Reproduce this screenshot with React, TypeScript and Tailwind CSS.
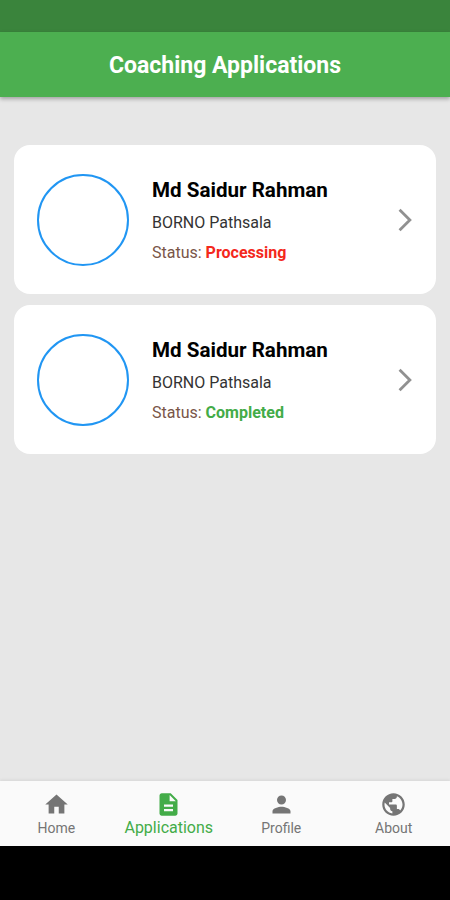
import { MdDescription, MdHome, MdPerson, MdPublic } from "react-icons/md";
import type { IconType } from "react-icons";

type Application = {
  id: number;
  name: string;
  center: string;
  status: "Processing" | "Completed";
};

type Tab = {
  label: string;
  icon: IconType;
};

const applications: Application[] = [
  { id: 1, name: "Md Saidur Rahman", center: "BORNO Pathsala", status: "Processing" },
  { id: 2, name: "Md Saidur Rahman", center: "BORNO Pathsala", status: "Completed" },
];

const tabs: Tab[] = [
  { label: "Home", icon: MdHome },
  { label: "Applications", icon: MdDescription },
  { label: "Profile", icon: MdPerson },
  { label: "About", icon: MdPublic },
];

const ApplicationCard = ({ application }: { application: Application }) => {
  const statusColor =
    application.status === "Processing" ? "text-[#f4281c]" : "text-[#43ac48]";

  return (
    <li className="flex h-[149px] items-center rounded-[16px] bg-white pr-[18px] pl-[23px]">
      <div className="size-[92px] shrink-0 rounded-full border-2 border-[#2196f3]" />
      <div className="ml-[23px] flex-1 pt-[3px] whitespace-nowrap">
        <h2 className="text-[20.6px] leading-[30px] font-bold text-black">
          {application.name}
        </h2>
        <p className="mt-[3px] text-[16px] leading-[30px] text-[#333]">
          {application.center}
        </p>
        <p className="text-[16px] leading-[30px] text-[#795548]">
          Status: <span className={`font-bold ${statusColor}`}>{application.status}</span>
        </p>
      </div>
      <svg viewBox="0 0 24 24" className="size-[26px] shrink-0" fill="none">
        <path d="M7 2.5 16.5 12 7 21.5" stroke="#919191" strokeWidth="2.6" />
      </svg>
    </li>
  );
};

const BottomNav = () => (
  <nav className="z-10 grid h-[65px] shrink-0 grid-cols-4 bg-[#fafafa] shadow-[0_-1px_3px_rgba(0,0,0,0.08)]">
    {tabs.map(({ label, icon: Icon }) => {
      const active = label === "Applications";
      return (
        <button
          key={label}
          type="button"
          className={`flex flex-col items-center pt-[10px] ${
            active ? "text-[#43ac48]" : "text-[#757575]"
          }`}
        >
          <Icon className="size-[27px] shrink-0" />
          <span
            className={
              active ? "text-[16px] leading-[20px]" : "text-[14px] leading-[21px]"
            }
          >
            {label}
          </span>
        </button>
      );
    })}
  </nav>
);

const App = () => {
  return (
    <div className="flex h-[900px] w-[450px] flex-col overflow-hidden bg-[#e7e7e7] font-[Roboto,sans-serif]">
      <div className="h-8 shrink-0 bg-[#3a843c]" />
      <header className="z-10 flex h-[65px] shrink-0 items-center justify-center bg-[#4caf50] pt-[3px] shadow-[0_2px_4px_rgba(0,0,0,0.3)]">
        <h1 className="text-[23px] leading-8 font-bold text-white">Coaching Applications</h1>
      </header>
      <main className="flex-1 px-[14px] pt-12">
        <ul className="flex flex-col gap-[11px]">
          {applications.map((application) => (
            <ApplicationCard key={application.id} application={application} />
          ))}
        </ul>
      </main>
      <BottomNav />
      <div className="h-[54px] shrink-0 bg-black" />
    </div>
  );
};

export default App;
